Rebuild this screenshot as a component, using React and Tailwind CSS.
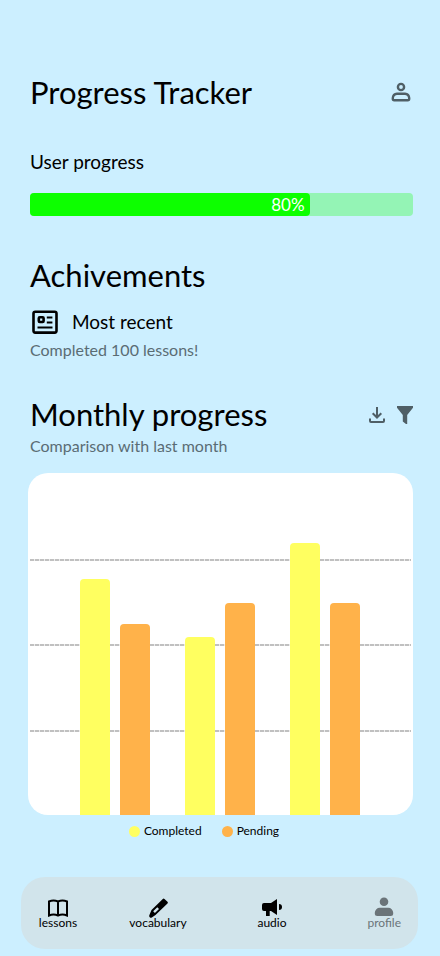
import React from "react";

const groups = [
  { completed: 236, pending: 191 },
  { completed: 178, pending: 212 },
  { completed: 272, pending: 212 },
];

const gridLines = [1, 2, 3];

function PersonOutlineIcon() {
  return (
    <svg className="h-6 w-6" viewBox="0 0 24 24" fill="none" stroke="currentColor" strokeWidth="2.4">
      <circle cx="12" cy="7" r="3.1" />
      <path d="M8 13.800h8a4.600 4.600 0 0 1 4.200 4.200v.8a1.400 1.400 0 0 1-1.400 1.400H5.200a1.400 1.400 0 0 1-1.400-1.400V18A4.600 4.600 0 0 1 8 13.800z" />
    </svg>
  );
}

function NewsIcon() {
  return (
    <svg className="h-[30px] w-[30px]" viewBox="0 0 30 30" fill="none" stroke="currentColor">
      <rect x="3.500" y="4.800" width="23" height="20.800" rx="1.800" strokeWidth="2.600" />
      <rect x="8.800" y="10.200" width="4.800" height="4.800" rx="1" strokeWidth="2.600" />
      <path d="M16.800 10.500h5.600M16.800 15.500h5.600M7.500 20.500h15" strokeWidth="2.200" />
    </svg>
  );
}

function DownloadIcon() {
  return (
    <svg className="h-6 w-6" viewBox="0 0 24 24" fill="none" stroke="currentColor" strokeWidth="2">
      <path d="M12 4v10M7.700 10.200l4.300 4.300 4.300-4.300M5 15.500V18a1 1 0 0 0 1 1h12a1 1 0 0 0 1-1v-2.500" />
    </svg>
  );
}

function FunnelIcon() {
  return (
    <svg className="h-6 w-6" viewBox="0 0 24 24" fill="currentColor">
      <path d="M4 3h16v1.800L14.200 12v9h-1.200l-3.200-2.500V12L4 4.800z" />
    </svg>
  );
}

function BookIcon() {
  return (
    <svg className="h-6 w-6" viewBox="0 0 24 24" fill="none" stroke="currentColor" strokeWidth="2">
      <path d="M3 19.500V5.500Q7.500 3.500 12 5.500Q16.500 3.500 21 5.500v14Q16.500 17.300 12 19.500Q7.500 17.300 3 19.500zM12 5.500v14" />
    </svg>
  );
}

function PencilIcon() {
  return (
    <svg className="h-6 w-6" viewBox="0 0 24 24" fill="currentColor">
      <path fillRule="evenodd" d="M16.800 3a1.200 1.200 0 0 1 1.700 0l3 2.800a1.200 1.200 0 0 1 0 1.700L9.500 19l-3.700 2.500a1.800 1.800 0 0 1-2.500-2.300L5.500 14zM11.300 11.300l-4.100 4 1.700 1.700 4.100-4z" />
    </svg>
  );
}

function MegaphoneIcon() {
  return (
    <svg className="h-6 w-6" viewBox="0 0 24 24" fill="currentColor">
      <path d="M17 3v16l-6-4H9.700v5H6v-5H4a2 2 0 0 1-2-2V9a2 2 0 0 1 2-2h7z" />
      <path d="M19 8a3 3 0 0 1 0 6z" />
    </svg>
  );
}

function PersonIcon() {
  return (
    <svg className="h-6 w-6" viewBox="0 0 24 24" fill="currentColor">
      <circle cx="12" cy="5.800" r="4.300" />
      <path d="M8 11.800h8a5 5 0 0 1 5.200 5v.8a2.500 2.500 0 0 1-2.500 2.500H5.300a2.500 2.500 0 0 1-2.500-2.500v-.8a5 5 0 0 1 5.200-5z" />
    </svg>
  );
}

const tabs = [
  { label: "lessons", Icon: BookIcon, look: "justify-self-center text-black" },
  { label: "vocabulary", Icon: PencilIcon, look: "justify-self-center text-black" },
  { label: "audio", Icon: MegaphoneIcon, look: "justify-self-center text-black" },
  { label: "profile", Icon: PersonIcon, look: "justify-self-end pr-[17px] text-[#6b7479]", current: true },
];

export default function App() {
  return (
    <div className="flex min-h-screen flex-col bg-[#ccefff] font-['Lato',sans-serif] text-black">
      <main className="flex-1 pl-[30px] pr-[27px] pt-[72px]">
        <header className="flex items-center justify-between">
          <h1 className="text-[31px] leading-10">Progress Tracker</h1>
          <button type="button" aria-label="Account" className="text-[#4f5f66]">
            <PersonOutlineIcon />
          </button>
        </header>

        <section className="mt-[38px]">
          <h2 id="user-progress" className="text-[19px] leading-6">User progress</h2>
          <div
            role="progressbar"
            aria-labelledby="user-progress"
            aria-valuenow={80}
            className="mt-[19px] h-[23px] rounded bg-[#94f4b5]"
          >
            <div className="flex h-full w-[73%] items-center justify-end rounded bg-[#0dff00] pr-[5px] text-[17px] text-white">
              80%
            </div>
          </div>
        </section>

        <section className="mt-[39px]">
          <h2 className="text-[31px] leading-10">Achivements</h2>
          <div className="mt-3 flex items-center gap-3">
            <NewsIcon />
            <h3 className="text-[19px] leading-6">Most recent</h3>
          </div>
          <p className="mt-[3px] text-base leading-5 text-[#5a6c74]">Completed 100 lessons!</p>
        </section>

        <section className="mt-[34px]">
          <div className="flex items-center justify-between">
            <h2 className="text-[31px] leading-10">Monthly progress</h2>
            <div className="-mr-1 flex gap-1 pt-[2px] text-[#4f5f66]">
              <button type="button" aria-label="Download"><DownloadIcon /></button>
              <button type="button" aria-label="Filter"><FunnelIcon /></button>
            </div>
          </div>
          <p className="mt-[2px] text-base leading-5 text-[#5a6c74]">Comparison with last month</p>

          <div className="relative -ml-[2px] mt-[17px] flex h-[342px] items-end justify-center gap-[35px] overflow-hidden rounded-[20px] bg-white pr-px">
            <div className="absolute inset-0 flex flex-col">
              {gridLines.map((n) => (
                <div key={n} className="flex flex-1 flex-col justify-end px-[2px]">
                  <div className="-mb-[2px] h-[2px] bg-[repeating-linear-gradient(90deg,#c0c0c0_0_4px,#ececec_4px_5px)]" />
                </div>
              ))}
              <div className="flex-1" />
            </div>
            {groups.map((g, i) => (
              <div key={i} className="relative flex items-end gap-[10px]">
                <div className="w-[30px] rounded-t bg-[#ffff60]" style={{ height: g.completed }} />
                <div className="w-[30px] rounded-t bg-[#ffb24a]" style={{ height: g.pending }} />
              </div>
            ))}
          </div>

          <ul className="mt-2 flex justify-center gap-5 pr-[35px] text-xs leading-4">
            <li className="flex items-center gap-1">
              <span className="h-[11px] w-[11px] rounded-full bg-[#ffff60]" />
              Completed
            </li>
            <li className="flex items-center gap-1">
              <span className="h-[11px] w-[11px] rounded-full bg-[#ffb24a]" />
              Pending
            </li>
          </ul>
        </section>
      </main>

      <nav className="mb-[7px] ml-[21px] mr-[22px] mt-[38px] grid h-[72px] grid-cols-[74fr_126fr_102fr_95fr] items-center rounded-[24px] bg-[#d1e4eb] pb-[2px]">
        {tabs.map(({ label, Icon, look, current }) => (
          <a
            key={label}
            href={"#" + label}
            aria-current={current ? "page" : undefined}
            className={"flex flex-col items-center text-xs leading-3 " + look}
          >
            <Icon />
            <span className="-mt-[3px]">{label}</span>
          </a>
        ))}
      </nav>
    </div>
  );
}
